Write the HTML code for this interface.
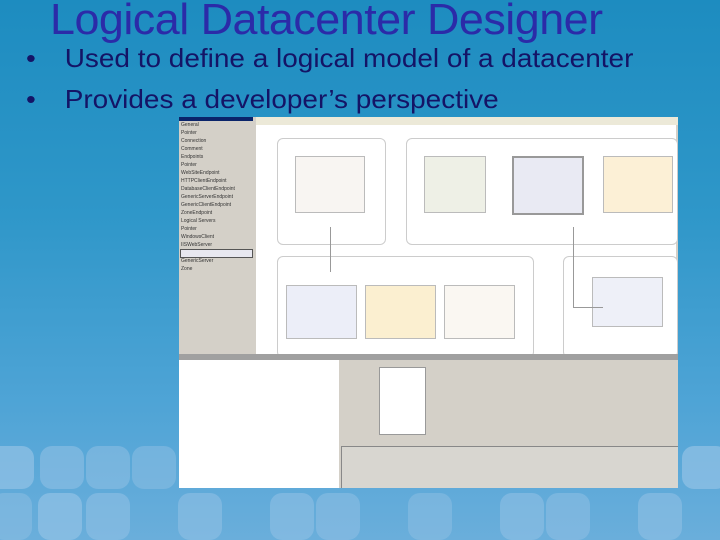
<!DOCTYPE html>
<html><head><style>
body{margin:0;width:720px;height:540px;overflow:hidden;position:relative;font-family:"Liberation Sans",sans-serif;
background:linear-gradient(180deg,#1d8cc0 0%,#2f97c9 40%,#4fa4d6 75%,#6aaedb 100%);}
.t{position:absolute;border-radius:12px;background:#8fc0e4;opacity:.75}
.ttl{position:absolute;left:50px;top:-5px;font-size:44px;color:#2b2ba8;letter-spacing:-0.5px;white-space:nowrap;transform-origin:0 0;transform:scaleX(1.02)}
.b{position:absolute;left:26px;font-size:26px;color:#141466;white-space:nowrap;transform-origin:0 0;transform:scaleX(1.075)}
.b span{display:inline-block;width:36px}
.sc{position:absolute;left:179px;top:117px;width:499px;height:371px;background:#d4d0c8;overflow:hidden}
.box{position:absolute;border:1px solid #ccc;border-radius:6px;background:#fff}
.n{position:absolute;border:1px solid #bbb;}
.ln{position:absolute;background:#999}
.tb div{height:7px;margin:1px 2px;border-bottom:0;font-size:5px;color:#333}
</style></head><body>
<div class="t" style="left:-12px;top:446px;width:46px;height:43px"></div>
<div class="t" style="left:40px;top:446px;width:44px;height:43px;opacity:.6"></div>
<div class="t" style="left:86px;top:446px;width:44px;height:43px;opacity:.55"></div>
<div class="t" style="left:132px;top:446px;width:44px;height:43px;opacity:.5"></div>
<div class="t" style="left:682px;top:446px;width:46px;height:43px"></div>
<div class="t" style="left:38px;top:493px;width:44px;height:47px"></div>
<div class="t" style="left:86px;top:493px;width:44px;height:47px;opacity:.6"></div>
<div class="t" style="left:178px;top:493px;width:44px;height:47px;opacity:.6"></div>
<div class="t" style="left:270px;top:493px;width:44px;height:47px;opacity:.6"></div>
<div class="t" style="left:316px;top:493px;width:44px;height:47px;opacity:.55"></div>
<div class="t" style="left:408px;top:493px;width:44px;height:47px;opacity:.5"></div>
<div class="t" style="left:500px;top:493px;width:44px;height:47px;opacity:.6"></div>
<div class="t" style="left:546px;top:493px;width:44px;height:47px;opacity:.55"></div>
<div class="t" style="left:638px;top:493px;width:44px;height:47px;opacity:.6"></div>
<div class="t" style="left:-8px;top:493px;width:40px;height:47px;opacity:.5"></div>
<div class="ttl">Logical Datacenter Designer</div>
<div class="b" style="top:43px"><span>•</span>Used to define a logical model of a datacenter</div>
<div class="b" style="top:84px"><span>•</span>Provides a developer’s perspective</div>
<div class="sc">
 <div style="position:absolute;left:0;top:0;width:74px;height:4px;background:#0a246a"></div>
 <div class="tb" style="position:absolute;left:0;top:4px;width:74px;height:233px;background:#d4d0c8">
  <div>General</div><div>Pointer</div><div>Connection</div><div>Comment</div><div>Endpoints</div><div>Pointer</div><div>WebSiteEndpoint</div><div>HTTPClientEndpoint</div><div>DatabaseClientEndpoint</div><div>GenericServerEndpoint</div><div>GenericClientEndpoint</div><div>ZoneEndpoint</div><div>Logical Servers</div><div>Pointer</div><div>WindowsClient</div><div>IISWebServer</div><div>DatabaseServer</div><div>GenericServer</div><div>Zone</div>
 </div>
 <div style="position:absolute;left:1px;top:132px;width:71px;height:7px;border:1px solid #555;background:#e8e8f0"></div>
 <div style="position:absolute;left:77px;top:0;width:422px;height:8px;background:#ece9d8"></div>
 <div style="position:absolute;left:77px;top:8px;width:420px;height:229px;background:#fff"></div>
 <div class="box" style="left:98px;top:21px;width:107px;height:105px"></div>
 <div class="box" style="left:227px;top:21px;width:270px;height:105px"></div>
 <div class="box" style="left:98px;top:139px;width:255px;height:100px"></div>
 <div class="box" style="left:384px;top:139px;width:113px;height:100px"></div>
 <div class="n" style="left:116px;top:39px;width:68px;height:55px;background:#f8f5f2"></div>
 <div class="n" style="left:245px;top:39px;width:60px;height:55px;background:#eef0e6"></div>
 <div class="n" style="left:333px;top:39px;width:68px;height:55px;background:#e9eaf3;border:2px solid #999"></div>
 <div class="n" style="left:424px;top:39px;width:68px;height:55px;background:#fcf0d6"></div>
 <div class="n" style="left:107px;top:168px;width:69px;height:52px;background:#eceef8"></div>
 <div class="n" style="left:186px;top:168px;width:69px;height:52px;background:#fbefd0"></div>
 <div class="n" style="left:265px;top:168px;width:69px;height:52px;background:#faf7f2"></div>
 <div class="n" style="left:413px;top:160px;width:69px;height:48px;background:#eef0f8"></div>
 <div class="ln" style="left:151px;top:110px;width:1px;height:45px"></div>
 <div class="ln" style="left:394px;top:110px;width:1px;height:80px"></div>
 <div class="ln" style="left:394px;top:190px;width:30px;height:1px"></div>
 <div style="position:absolute;left:0;top:237px;width:499px;height:6px;background:#a0a0a0"></div>
 <div style="position:absolute;left:0;top:243px;width:160px;height:128px;background:#fff"></div>
 <div style="position:absolute;left:200px;top:250px;width:45px;height:66px;background:#fff;border:1px solid #999"></div>
 <div style="position:absolute;left:162px;top:329px;width:336px;height:42px;background:#d8d6d0;border:1px solid #888"></div>
</div>
</body></html>
